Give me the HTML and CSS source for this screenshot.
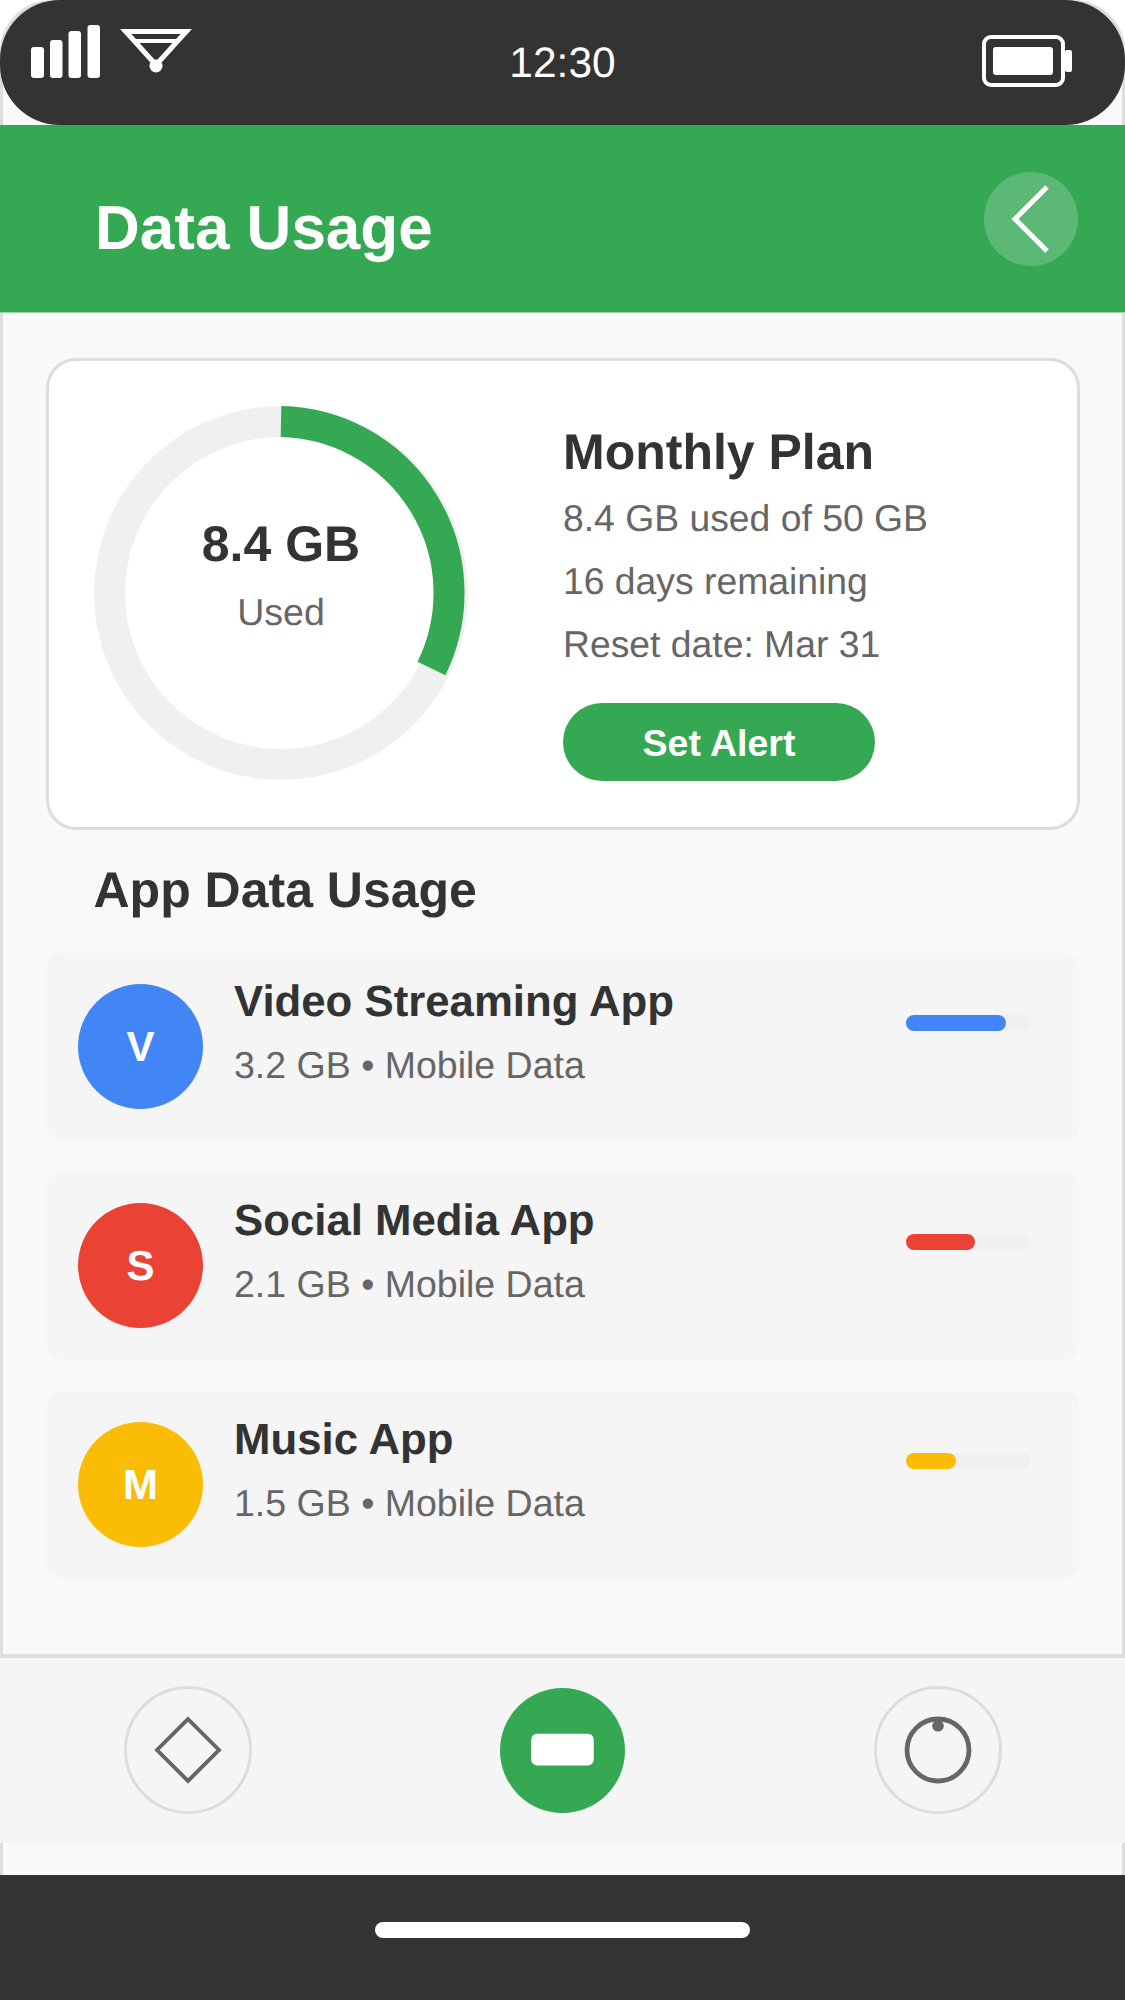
FILE: index.html
```html
<!DOCTYPE html>
<html lang="en">
<head>
    <meta charset="UTF-8">
    <meta name="viewport" content="width=device-width, initial-scale=1.0">
    <title>Data Usage</title>
    <link rel="stylesheet" href="styles.css">
</head>
<body>
    <div class="phone">
        <div class="status-bar">
            <svg class="status-icons" width="200" height="90" viewBox="0 0 200 90">
                <rect x="31" y="47" width="13" height="31" rx="3" fill="#fff"/>
                <rect x="50" y="40" width="12.5" height="38" rx="3" fill="#fff"/>
                <rect x="68.5" y="31" width="12.5" height="47" rx="3" fill="#fff"/>
                <rect x="87.5" y="25" width="12.5" height="53" rx="3" fill="#fff"/>
                <path d="M125.7 31.5 H186.3 L156 65 Z" fill="none" stroke="#fff" stroke-width="5"/>
                <path d="M134 41 H178" stroke="#fff" stroke-width="4"/>
                <circle cx="156" cy="66" r="6.5" fill="#fff"/>
            </svg>
            <span class="clock">12:30</span>
            <svg class="battery" width="94" height="60" viewBox="0 0 94 60">
                <rect x="4" y="4" width="79" height="48" rx="7" fill="none" stroke="#fff" stroke-width="4"/>
                <rect x="13" y="14" width="60" height="28" rx="3" fill="#fff"/>
                <rect x="85" y="17" width="7" height="22" rx="2" fill="#fff"/>
            </svg>
        </div>

        <header class="app-header">
            <h1>Data Usage</h1>
            <div class="back-btn">
                <svg width="94" height="94" viewBox="0 0 94 94">
                    <path d="M63 15 L31 47 L63 79" fill="none" stroke="#fff" stroke-width="5"/>
                </svg>
            </div>
        </header>

        <main class="content">
            <section class="plan-card">
                <div class="donut">
                    <svg width="374" height="374" viewBox="0 0 374 374">
                        <circle cx="187" cy="187" r="171.5" fill="none" stroke="#f0f0f0" stroke-width="31"/>
                        <path d="M187 15.5 A171.5 171.5 0 0 1 337.5 262.5" fill="none" stroke="#34a853" stroke-width="31"/>
                    </svg>
                    <div class="donut-label">
                        <div class="donut-value">8.4 GB</div>
                        <div class="donut-caption">Used</div>
                    </div>
                </div>
                <div class="plan-info">
                    <h2>Monthly Plan</h2>
                    <p>8.4 GB used of 50 GB</p>
                    <p>16 days remaining</p>
                    <p>Reset date: Mar 31</p>
                    <button class="alert-btn">Set Alert</button>
                </div>
            </section>

            <h2 class="section-title">App Data Usage</h2>

            <div class="app-row">
                <div class="avatar blue">V</div>
                <div class="app-text">
                    <div class="app-name">Video Streaming App</div>
                    <div class="app-meta">3.2 GB • Mobile Data</div>
                </div>
                <div class="bar"><div class="bar-fill blue" style="width: 80%"></div></div>
            </div>
            <div class="app-row">
                <div class="avatar red">S</div>
                <div class="app-text">
                    <div class="app-name">Social Media App</div>
                    <div class="app-meta">2.1 GB • Mobile Data</div>
                </div>
                <div class="bar"><div class="bar-fill red" style="width: 55%"></div></div>
            </div>
            <div class="app-row">
                <div class="avatar yellow">M</div>
                <div class="app-text">
                    <div class="app-name">Music App</div>
                    <div class="app-meta">1.5 GB • Mobile Data</div>
                </div>
                <div class="bar"><div class="bar-fill yellow" style="width: 40%"></div></div>
            </div>
        </main>

        <nav class="bottom-nav">
            <div class="nav-item">
                <svg width="126" height="126" viewBox="0 0 126 126">
                    <path d="M63 31 L95 63 L63 95 L31 63 Z" fill="none" stroke="#666" stroke-width="4"/>
                </svg>
            </div>
            <div class="nav-item active">
                <svg width="126" height="126" viewBox="0 0 126 126">
                    <rect x="31.5" y="46.5" width="63" height="32" rx="6" fill="#fff"/>
                </svg>
            </div>
            <div class="nav-item">
                <svg width="126" height="126" viewBox="0 0 126 126">
                    <circle cx="63" cy="63" r="32" fill="none" stroke="#666" stroke-width="5"/>
                    <circle cx="63" cy="38" r="6" fill="#666"/>
                </svg>
            </div>
        </nav>

        <div class="home-bar">
            <div class="home-pill"></div>
        </div>
    </div>
</body>
</html>
```

FILE: styles.css
```css
* {
    box-sizing: border-box;
}

body {
    margin: 0;
    padding: 0;
    background-color: #fff;
    font-family: "Liberation Sans", Arial, sans-serif;
    color: #333;
    text-rendering: geometricPrecision;
}

.phone {
    width: 1125px;
    height: 2000px;
    border: 3px solid #ddd;
    border-radius: 52px;
    background-color: #f8f9fa;
    display: flex;
    flex-direction: column;
}

.status-bar {
    height: 125px;
    margin: -3px -3px 0;
    background-color: #333;
    border-radius: 60px;
    display: grid;
    grid-template-columns: 300px 1fr 300px;
    align-items: start;
    flex-shrink: 0;
}

.status-icons {
    display: block;
}

.clock {
    margin-top: 40px;
    color: #fff;
    font-size: 42.5px;
    line-height: 47px;
    text-align: center;
}

.battery {
    justify-self: end;
    margin-top: 33px;
    margin-right: 51px;
}

.app-header {
    height: 188px;
    margin: 0 -3px;
    padding: 0 47px 0 96px;
    border-bottom: 1px solid #9ad3a9;
    background-color: #34a853;
    display: flex;
    align-items: center;
    justify-content: space-between;
    flex-shrink: 0;
}

.app-header h1 {
    margin: 20px 0 0 -1px;
    color: #fff;
    font-size: 62px;
    line-height: 72px;
}

.back-btn {
    width: 94px;
    height: 94px;
    margin-top: 1px;
    border-radius: 50%;
    background-color: rgba(255, 255, 255, 0.2);
}

.back-btn svg {
    display: block;
}

.content {
    flex: 1;
    padding: 45px 42px 0 43px;
}

.plan-card {
    height: 472px;
    border: 3px solid #ddd;
    border-radius: 30px;
    background-color: #fff;
    padding: 45px 0 0 45px;
    display: flex;
}

.donut {
    position: relative;
    width: 374px;
    height: 374px;
    flex-shrink: 0;
}

.donut svg {
    display: block;
}

.donut-label {
    position: absolute;
    top: 110px;
    left: 0;
    width: 374px;
    text-align: center;
}

.donut-value {
    font-size: 50px;
    font-weight: bold;
    line-height: 56px;
}

.donut-caption {
    margin-top: 19px;
    color: #666;
    font-size: 37.5px;
    line-height: 42px;
}

.plan-info {
    margin-left: 95px;
}

.plan-info h2 {
    margin: 17px 0 16px;
    font-size: 50px;
    line-height: 58px;
}

.plan-info p {
    margin: 0 0 21px;
    color: #666;
    font-size: 37.3px;
    line-height: 42px;
}

.alert-btn {
    display: block;
    width: 312px;
    height: 78px;
    margin-top: 38px;
    padding: 2px 0 0;
    border: none;
    border-radius: 39px;
    background-color: #34a853;
    color: #fff;
    font-family: inherit;
    font-size: 37.5px;
    font-weight: bold;
}

.section-title {
    margin: 31px 0 34px 47.5px;
    font-size: 50px;
    line-height: 58px;
}

.app-row {
    height: 188px;
    margin: 0 1px 31px;
    padding: 31px 48px 0 31px;
    border-radius: 15px;
    background-color: #f5f5f5;
    display: flex;
    align-items: flex-start;
}

.avatar {
    width: 125px;
    height: 125px;
    border-radius: 50%;
    color: #fff;
    font-size: 42px;
    font-weight: bold;
    display: flex;
    align-items: center;
    justify-content: center;
    flex-shrink: 0;
}

.app-text {
    flex: 1;
    margin-left: 31px;
}

.app-name {
    margin-top: -7px;
    font-size: 43.75px;
    font-weight: bold;
    line-height: 50px;
}

.app-meta {
    margin-top: 17px;
    color: #666;
    font-size: 37.5px;
    line-height: 42px;
}

.bar {
    width: 125px;
    height: 16px;
    margin-top: 31px;
    border-radius: 8px;
    background-color: #f0f0f0;
}

.bar-fill {
    height: 100%;
    border-radius: 8px;
}

.blue {
    background-color: #4285f4;
}

.red {
    background-color: #ea4335;
}

.yellow {
    background-color: #fbbc05;
}

.bottom-nav {
    height: 189px;
    margin: 0 -3px 32px;
    padding-bottom: 1px;
    border-top: 4px solid #ddd;
    background-color: #f5f5f5;
    display: grid;
    grid-template-columns: repeat(3, 1fr);
    align-items: center;
    justify-items: center;
    flex-shrink: 0;
}

.nav-item {
    width: 128px;
    height: 128px;
    border: 3px solid #ddd;
    border-radius: 50%;
    display: flex;
    align-items: center;
    justify-content: center;
}

.nav-item.active {
    width: 125px;
    height: 125px;
    border: none;
    background-color: #34a853;
}

.home-bar {
    height: 125px;
    margin: 0 -3px -3px;
    padding-top: 47px;
    background-color: #333;
    flex-shrink: 0;
}

.home-pill {
    width: 375px;
    height: 16px;
    margin: 0 auto;
    border-radius: 8px;
    background-color: #fff;
}
```
